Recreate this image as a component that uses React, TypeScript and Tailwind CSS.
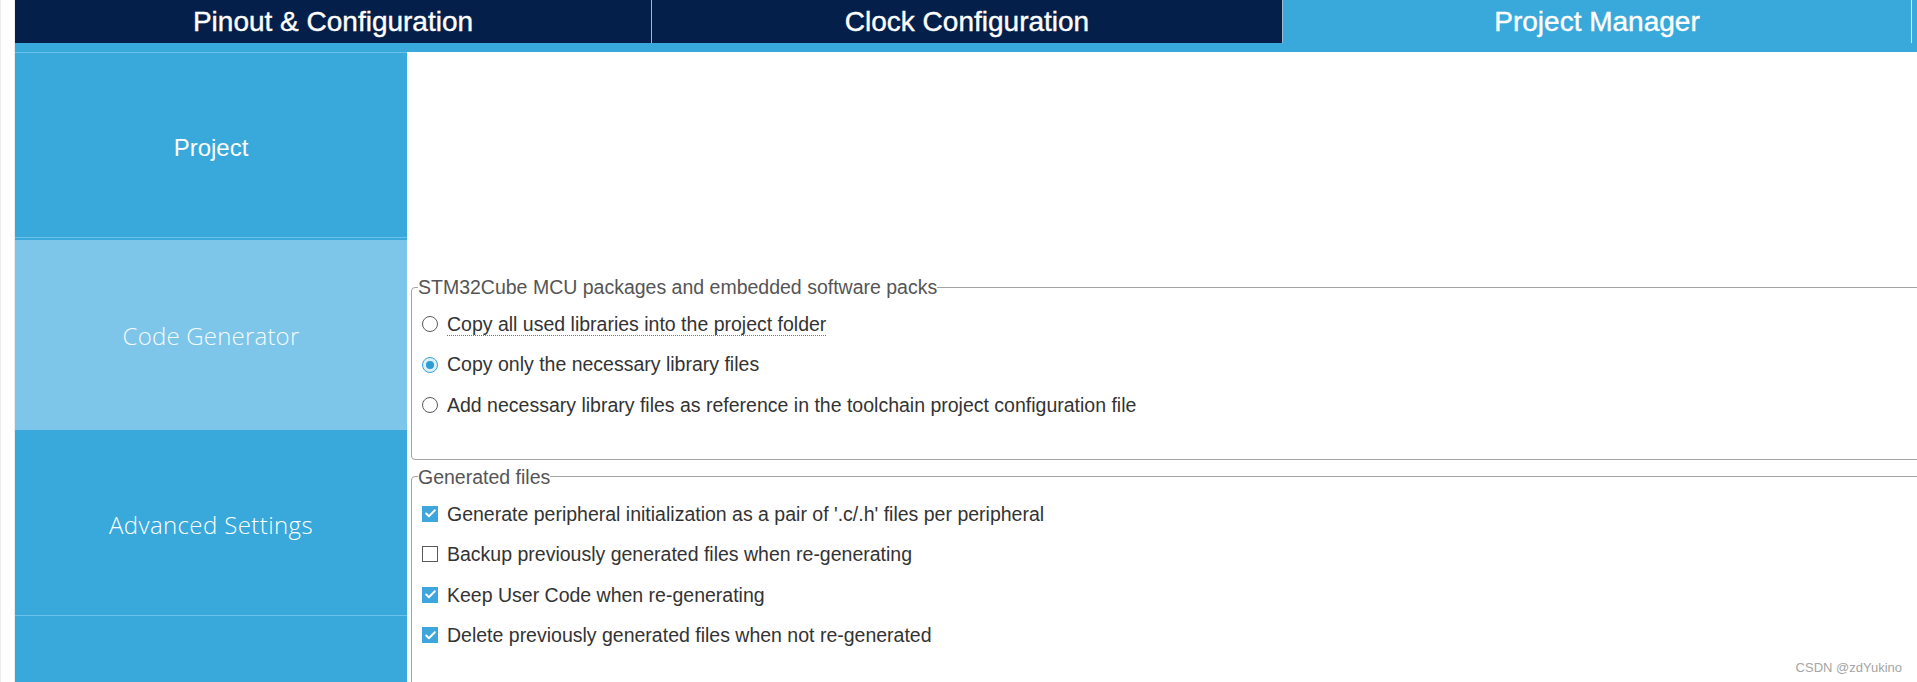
import { Check } from "lucide-react";

interface OptionProps {
  label: string;
  checked: boolean;
  focus?: boolean;
}

const packOptions: OptionProps[] = [
  { label: "Copy all used libraries into the project folder", checked: false, focus: true },
  { label: "Copy only the necessary library files", checked: true },
  {
    label: "Add necessary library files as reference in the toolchain project configuration file",
    checked: false,
  },
];

const generatedFiles: OptionProps[] = [
  { label: "Generate peripheral initialization as a pair of '.c/.h' files per peripheral", checked: true },
  { label: "Backup previously generated files when re-generating", checked: false },
  { label: "Keep User Code when re-generating", checked: true },
  { label: "Delete previously generated files when not re-generated", checked: true },
];

function Radio({ checked }: { checked: boolean }) {
  if (checked) {
    return (
      <span className="flex h-4 w-4 shrink-0 items-center justify-center rounded-full border border-[#3aa3d8] bg-[#dcf0fa]">
        <span className="h-2 w-2 rounded-full bg-[#2d9bd6]" />
      </span>
    );
  }
  return <span className="h-4 w-4 shrink-0 rounded-full border-[1.5px] border-[#5a5a5a] bg-white" />;
}

function CheckBox({ checked }: { checked: boolean }) {
  if (checked) {
    return (
      <span className="flex h-4 w-4 shrink-0 items-center justify-center bg-[#3ea6dc]">
        <Check className="h-[13px] w-[13px] text-white" strokeWidth={3.5} />
      </span>
    );
  }
  return <span className="h-4 w-4 shrink-0 border-[1.5px] border-[#5a5a5a] bg-white" />;
}

function Tab({ label, active }: { label: string; active?: boolean }) {
  return (
    <div
      className={`flex h-full items-center justify-center text-[28px] text-white [-webkit-text-stroke:0.4px_white] ${
        active ? "flex-1 bg-[#39a8db]" : "bg-[#04204a] border-r border-[#9fb6cc]"
      }`}
    >
      {label}
    </div>
  );
}

export default function App() {
  return (
    <div className="relative flex h-[682px] w-[1917px] overflow-hidden bg-white font-['Liberation_Sans',Arial,sans-serif]">
      <div className="w-[15px] shrink-0 border-l border-r border-[#ececec] bg-white" />

      <div className="flex min-w-0 flex-1 flex-col overflow-hidden">
        <div className="flex h-[43px] shrink-0">
          <div className="w-[637px]">
            <Tab label="Pinout & Configuration" />
          </div>
          <div className="w-[631px]">
            <Tab label="Clock Configuration" />
          </div>
          <Tab label="Project Manager" active />
          <div className="w-[1px] bg-[#d7eef9]" />
          <div className="w-[5px] bg-[#39a8db]" />
        </div>
        <div className="h-[9px] shrink-0 bg-[#39a8db]" />

        <div className="flex min-w-0 flex-1">
          <div className="flex w-[392px] shrink-0 flex-col">
            <div className="flex h-[185px] items-center justify-center border-t border-[#6cc2ea] bg-[#39a8db] pt-[5px] text-[24px] text-white">
              Project
            </div>
            <div className="h-[1px] bg-[#6cc2ea]" />
            <div className="h-[2px] bg-[#39a8db]" />
            <div className="flex h-[190px] items-center justify-center bg-[#7dc5e9] pt-[2px] font-['Open_Sans',sans-serif] text-[24px] font-light tracking-[0.2px] text-[#f4fafd]">
              Code Generator
            </div>
            <div className="flex h-[185px] items-center justify-center bg-[#39a8db] pt-[5px] font-['Open_Sans',sans-serif] text-[24px] font-light tracking-[0.4px] text-white">
              Advanced Settings
            </div>
            <div className="h-[1px] bg-[#6cc2ea]" />
            <div className="flex-1 bg-[#39a8db]" />
          </div>

          <div className="min-w-0 flex-1 overflow-hidden pl-[4px] pt-[224px]">
            <fieldset className="w-[1530px] rounded-[4px] border border-[#a3a3a3] pb-[33px] pl-[6px] pt-[6px]">
              <legend className="px-0 text-[19.5px] leading-[22px] text-[#555]">
                STM32Cube MCU packages and embedded software packs
              </legend>
              {packOptions.map((opt) => (
                <div
                  key={opt.label}
                  className="ml-[4px] flex h-[40.5px] items-center gap-[9px] text-[19.5px] text-[#333]"
                >
                  <Radio checked={opt.checked} />
                  <span
                    className={`leading-[22px] ${
                      opt.focus ? "border-b border-dotted border-[#777]" : "border-b border-transparent"
                    }`}
                  >
                    {opt.label}
                  </span>
                </div>
              ))}
            </fieldset>

            <fieldset className="mt-[6px] w-[1530px] rounded-[4px] border border-[#a3a3a3] pb-[40px] pl-[6px] pt-[6px]">
              <legend className="px-0 text-[19.5px] leading-[22px] text-[#555]">Generated files</legend>
              {generatedFiles.map((opt) => (
                <div
                  key={opt.label}
                  className="ml-[4px] flex h-[40.5px] items-center gap-[9px] text-[19.5px] text-[#333]"
                >
                  <CheckBox checked={opt.checked} />
                  <span className="leading-[22px]">{opt.label}</span>
                </div>
              ))}
            </fieldset>
          </div>
        </div>
      </div>

      <span className="absolute bottom-[5px] right-[15px] text-[13px] text-[#a5a5a5]">CSDN @zdYukino</span>
    </div>
  );
}
